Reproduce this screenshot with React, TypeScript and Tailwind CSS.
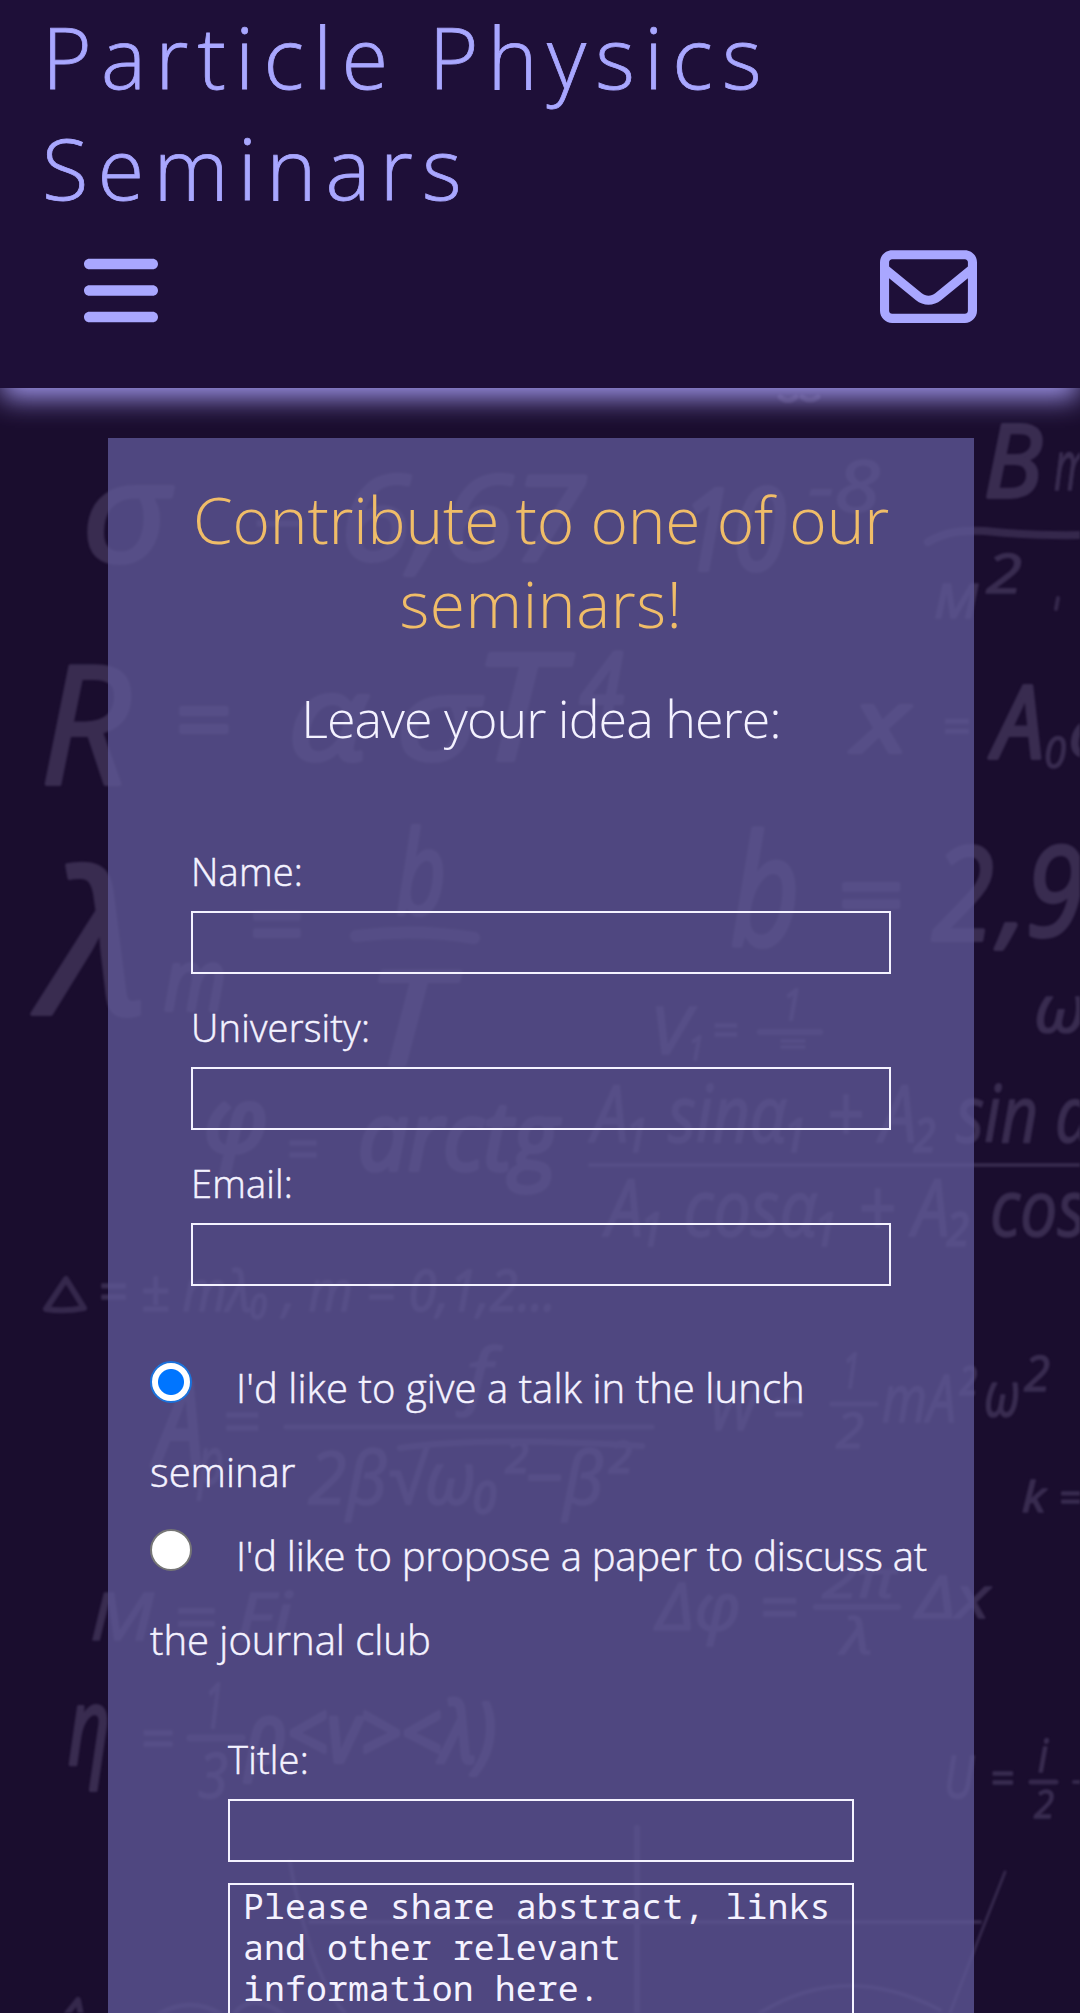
import type { ReactNode } from "react";
import { FaBars, FaRegEnvelope } from "react-icons/fa6";

type Glyph = [text: string, x: number, baseline: number, size: number, width: number];

/* Chalk formulas scattered over the page backdrop */
const glyphs: Glyph[] = [
  ["B", 984, 497, 100, 58],
  ["т", 1054, 490, 70, 36],
  ["2", 986, 593, 54, 36],
  ["м", 934, 618, 64, 46],
  ["σ", 82, 562, 140, 88],
  ["−", 252, 548, 70, 50],
  ["6,67", 340, 560, 118, 244],
  ["10", 680, 570, 114, 106],
  ["-8", 808, 512, 72, 72],
  ["R", 40, 784, 164, 90],
  ["=", 174, 752, 90, 56],
  ["α", 288, 760, 120, 80],
  ["σ", 396, 760, 118, 84],
  ["T", 472, 760, 148, 86],
  ["4", 580, 718, 92, 44],
  ["x", 854, 752, 86, 54],
  ["=", 942, 744, 52, 28],
  ["A", 994, 758, 100, 50],
  ["0", 1044, 768, 44, 22],
  ["c", 1068, 757, 70, 34],
  ["λ", 44, 1014, 196, 104],
  ["m", 164, 1010, 84, 62],
  ["=", 248, 955, 88, 54],
  ["b", 396, 914, 116, 50],
  ["T", 366, 1064, 130, 80],
  ["b", 730, 946, 154, 70],
  ["=", 836, 926, 88, 66],
  ["2", 932, 940, 130, 62],
  [",", 1000, 936, 100, 26],
  ["9", 1026, 936, 124, 58],
  ["V", 650, 1054, 66, 40],
  ["1", 688, 1060, 32, 16],
  ["=", 712, 1046, 44, 26],
  ["1", 782, 1020, 44, 20],
  ["=", 778, 1054, 30, 28],
  ["ω", 1034, 1032, 66, 52],
  ["φ", 204, 1152, 90, 64],
  ["=", 286, 1170, 60, 32],
  ["arctg", 358, 1170, 96, 200],
  ["A₁ sinα₁ + A₂ sin α", 592, 1142, 78, 500],
  ["A₁ cosα₁ + A₂ cos", 606, 1236, 78, 480],
  ["= ± mλ₀ , m = 0,1,2...", 98, 1311, 56, 458],
  ["A", 156, 1466, 118, 48],
  ["p", 198, 1484, 66, 26],
  ["=", 222, 1444, 62, 38],
  ["f", 466, 1400, 72, 26],
  ["2β√ω₀²−β²", 308, 1504, 74, 320],
  ["W =", 708, 1430, 62, 96],
  ["1", 842, 1388, 50, 18],
  ["2", 836, 1448, 50, 28],
  ["mA²", 882, 1422, 66, 92],
  ["ω", 984, 1416, 62, 36],
  ["2", 1024, 1391, 50, 26],
  ["k =", 1022, 1512, 42, 64],
  ["M = Fi", 90, 1640, 66, 202],
  ["Δφ =", 656, 1630, 66, 142],
  ["2π", 822, 1598, 52, 74],
  ["λ", 842, 1654, 50, 30],
  ["Δx", 916, 1618, 58, 74],
  ["η", 68, 1764, 106, 42],
  ["=", 140, 1758, 56, 34],
  ["1", 204, 1728, 62, 20],
  ["3", 198, 1798, 62, 30],
  ["ρ<v><λ)", 246, 1762, 82, 250],
  ["U", 944, 1798, 58, 30],
  ["=", 990, 1794, 44, 24],
  ["i", 1038, 1772, 46, 10],
  ["2", 1034, 1818, 38, 20],
];

const strokes: [d: string, width: number][] = [
  ["M928 542 C945 532 960 530 985 531 Q1030 536 1084 535", 8],
  ["M1058 598 L1056 609", 4],
  ["M46 1309 Q64 1312 84 1308 L66 1279 Z", 6],
  ["M356 936 Q415 928 474 938", 12],
  ["M760 1032 H820", 6],
  ["M590 1165 H1084", 4],
  ["M286 1427 H652", 5],
  ["M400 1448 Q480 1436 642 1446", 6],
  ["M832 1404 H876", 5],
  ["M816 1607 H898", 6],
  ["M190 1738 H242", 7],
  ["M1031 1782 H1056", 5],
  ["M1074 1782 H1090", 4],
  ["M780 397 Q788 404 796 397 M802 397 Q810 403 818 397", 5],
  ["M637 1828 V2013", 6],
  ["M290 1862 Q310 1975 345 2013 M310 1922 H980", 4],
  ["M1005 1872 Q978 1940 950 2013", 3],
  ["M760 2013 Q845 1960 940 2010", 4],
  ["M62 2020 L78 2000 L82 2020", 6],
  ["M150 2020 Q190 1990 230 2020 Q250 1985 290 2020", 5],
];

function ChalkBackdrop() {
  return (
    <svg
      aria-hidden="true"
      viewBox="0 0 1080 2013"
      className="absolute inset-0 h-[2013px] w-[1080px] font-['Open_Sans','Noto_Sans','DejaVu_Sans',sans-serif] font-medium italic blur-[1.2px]"
    >
      <g fill="#392c50" stroke="#392c50" strokeLinejoin="round">
        {glyphs.map(([text, x, y, size, width], i) => (
          <text
            key={i}
            x={x}
            y={y}
            fontSize={size}
            strokeWidth={size > 80 ? 4 : 1.5}
            textLength={width}
            lengthAdjust="spacingAndGlyphs"
          >
            {text}
          </text>
        ))}
      </g>
      <g fill="none" stroke="#35284c" strokeLinecap="round" strokeLinejoin="round">
        {strokes.map(([d, width], i) => (
          <path key={i} d={d} strokeWidth={width} />
        ))}
      </g>
    </svg>
  );
}

function Field({ label }: { label: string }) {
  return (
    <label className="block h-[156px]">
      <span className="block h-[60px] text-[38px] leading-[58px] tracking-[0.2px]">{label}</span>
      <input type="text" className="mt-[9px] block h-[63px] w-full border-2 border-[#f4f2ff] bg-transparent px-3 outline-none" />
    </label>
  );
}

function Choice({ checked, children }: { checked?: boolean; children: ReactNode }) {
  return (
    <label className="block">
      <input
        type="radio"
        name="kind"
        defaultChecked={checked}
        className="mr-[44px] inline-block h-[42px] w-[42px] appearance-none rounded-full border-[2.5px] border-[#767676] bg-white align-[0px] checked:border-[#1a72dc] checked:bg-[radial-gradient(circle,#0075ff_12.5px,white_13.5px)]"
      />
      {children}
    </label>
  );
}

export default function App() {
  return (
    <div className="relative h-[2013px] w-[1080px] overflow-hidden bg-[#1a0d2e] font-['Open_Sans','Noto_Sans',sans-serif] font-light text-[#f4f2ff]">
      <ChalkBackdrop />
      <header className="relative h-[388px] bg-[#1e0f38] text-[#a9a7ff] shadow-[0_12px_26px_-2px_#a096ea]">
        <h1 className="pt-px pl-[42px] text-[85px] leading-[111px] [-webkit-text-stroke:0.8px_#a9a7ff]">
          <span className="block tracking-[9.2px]">Particle Physics</span>
          <span className="block tracking-[9.2px]">Seminars</span>
        </h1>
        <div className="mt-[14px] flex h-[98px] items-center justify-between pr-[103px] pl-[84px]">
          <FaBars className="mt-[8px] h-[85px] w-[74px]" />
          <FaRegEnvelope className="h-[97px] w-[97px]" />
        </div>
      </header>

      <main className="relative mt-[50px] ml-[108px] h-[1600px] w-[866px] bg-[#5f5997]/78 px-[42px] pt-[40px]">
        <h2 className="text-center text-[64px] leading-[84px] text-[#f0bd68]">
          <span className="block tracking-[-0.22px] whitespace-nowrap">Contribute to one of our</span>
          <span className="block tracking-[0.6px]">seminars!</span>
        </h2>
        <h3 className="mt-[38px] text-center text-[52px] leading-[68px] tracking-[-1px]">Leave your idea here:</h3>
        <form className="[-webkit-text-stroke:0.5px_#f4f2ff]">
          <div className="mt-[90px] px-[41px]">
            <Field label="Name:" />
            <Field label="University:" />
            <Field label="Email:" />
          </div>
          <div className="mt-[36px] text-[40px] leading-[84px] whitespace-nowrap">
            <Choice checked>
              <span className="tracking-[0.08px]">I'd like to give a talk in the lunch</span>
              <br />
              seminar
            </Choice>
            <Choice>
              <span className="tracking-[-0.27px]">I'd like to propose a paper to discuss at</span>
              <br />
              the journal club
            </Choice>
          </div>
          <div className="mt-[48px] px-[78px]">
            <Field label="Title:" />
            <textarea
              className="-mt-[3px] block h-[240px] w-full resize-none overflow-hidden border-2 border-[#f4f2ff] bg-transparent px-[13px] pt-0 pb-0 font-['Noto_Sans_Mono','DejaVu_Sans_Mono',monospace] text-[34.8px] leading-[41px] font-normal tracking-[0.1px] outline-none [-webkit-text-stroke:0] placeholder:text-[#f4f2ff]"
              placeholder="Please share abstract, links and other relevant information here."
            />
          </div>
        </form>
      </main>
    </div>
  );
}
